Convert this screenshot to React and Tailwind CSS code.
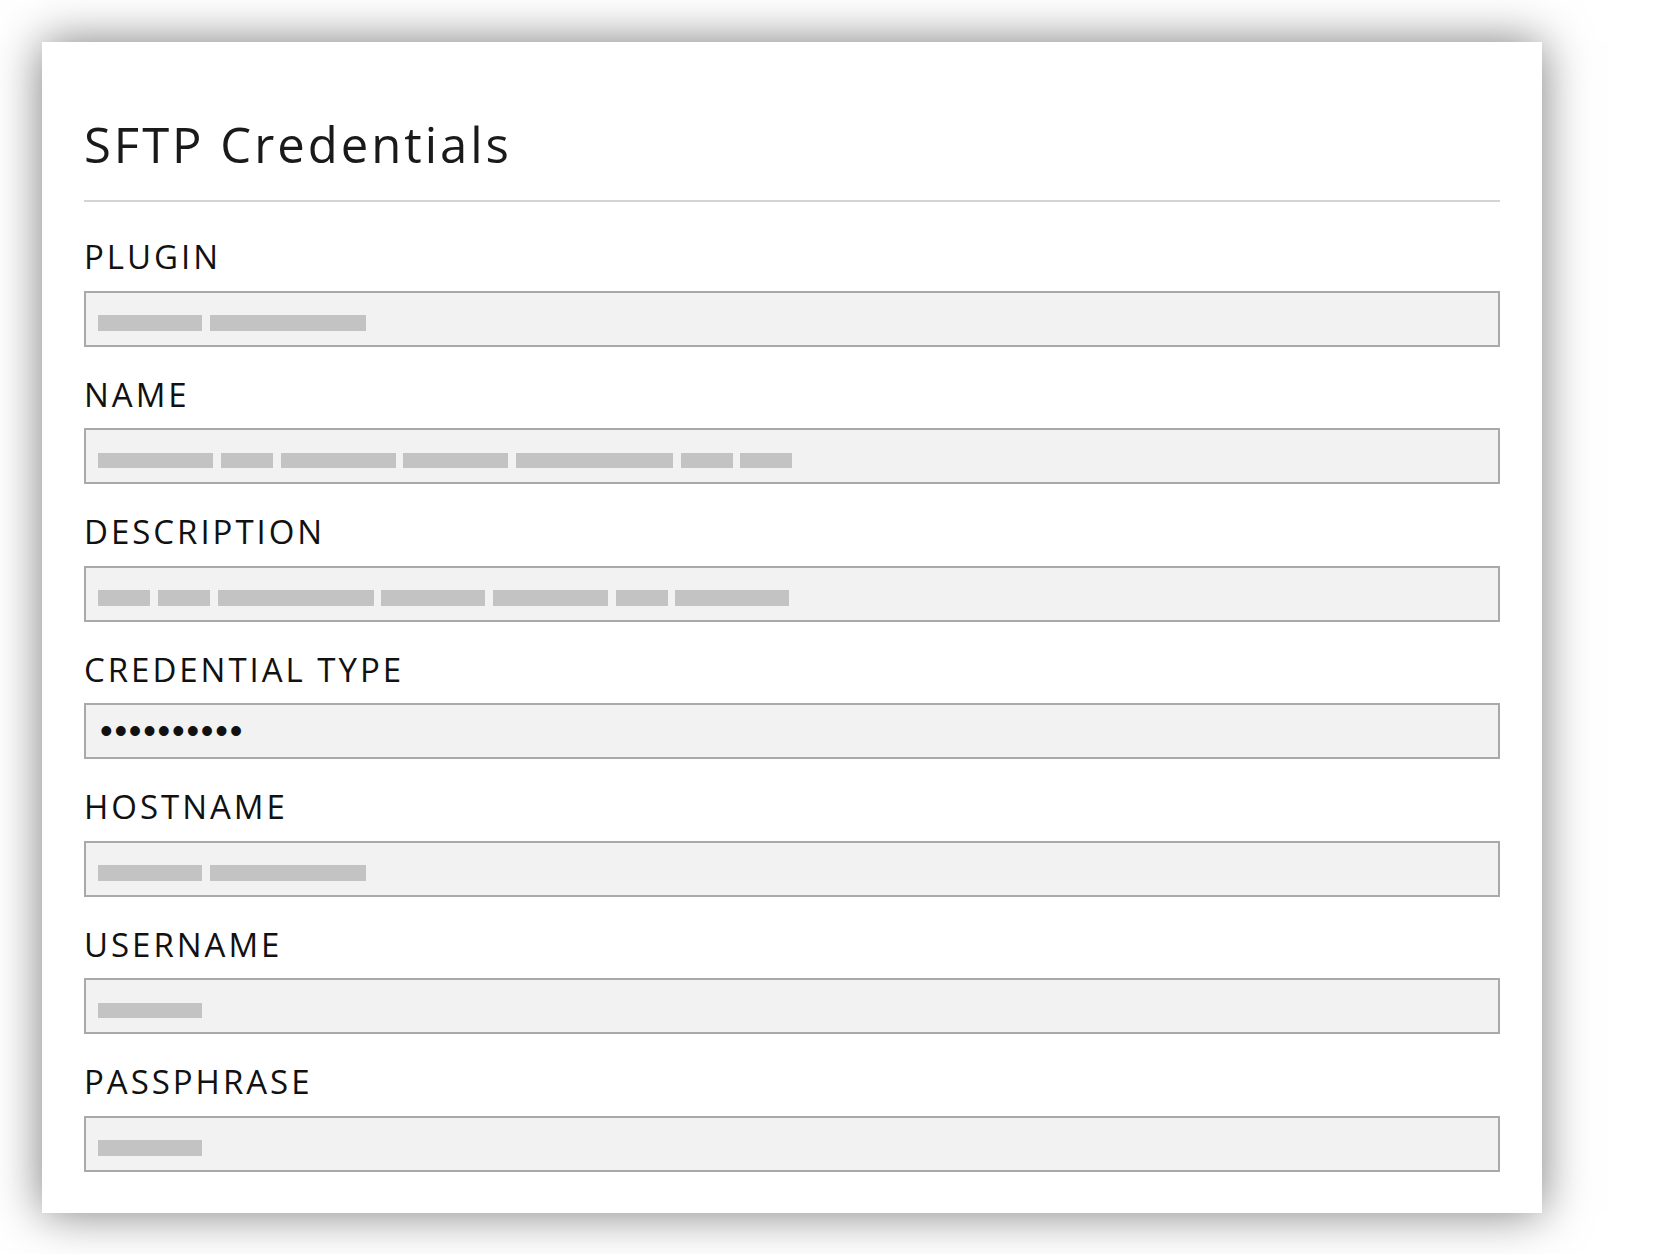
import React from "react";

const fields = [
  { label: "PLUGIN", bars: [104, 156] },
  { label: "NAME", bars: [115, 52, 115, 105, 157, 52, 52] },
  { label: "DESCRIPTION", bars: [52, 52, 156, 104, 115, 52, 114] },
  { label: "CREDENTIAL TYPE", secret: "••••••••••" },
  { label: "HOSTNAME", bars: [104, 156] },
  { label: "USERNAME", bars: [104] },
  { label: "PASSPHRASE", bars: [104] },
];

// Redacted value: grey blocks standing in for blurred text
const Field = ({ label, bars, secret }) => (
  <div className="flex flex-col">
    <label className="text-[33px] leading-[33px] tracking-[0.09em] text-[#111]">
      {label}
    </label>
    <div className="mt-[17.5px] h-[56px] border-2 border-[#a9a9a9] bg-[#f1f2f1] flex">
      {secret ? (
        <span className="self-center pl-[14px] font-['Liberation_Sans',sans-serif] text-[36px] leading-none tracking-[1.8px] text-[#111]">
          {secret}
        </span>
      ) : (
        <div className="flex items-start gap-[7.7px] pl-[12.3px] pt-[22.5px]">
          {bars.map((w, i) => (
            <span
              key={i}
              className="block h-[15.5px] bg-[#c3c3c3]"
              style={{ width: w }}
            />
          ))}
        </div>
      )}
    </div>
  </div>
);

export default function App() {
  return (
    <div className="min-h-screen bg-white p-[42px] font-['Open_Sans',sans-serif]">
      <div className="w-[1500px] bg-white px-[42px] pt-[77.5px] pb-[41.5px] shadow-[0_0_45px_rgba(0,0,0,0.52)]">
        <h1 className="text-[49px] leading-[49px] tracking-[0.061em] text-[#1a1a1a] font-normal">
          SFTP Credentials
        </h1>
        <div className="mt-[31.5px] h-[2px] bg-[#d4d4d4]" />
        <div className="mt-[38px] flex flex-col gap-[31px]">
          {fields.map((f) => (
            <Field key={f.label} {...f} />
          ))}
        </div>
      </div>
    </div>
  );
}
